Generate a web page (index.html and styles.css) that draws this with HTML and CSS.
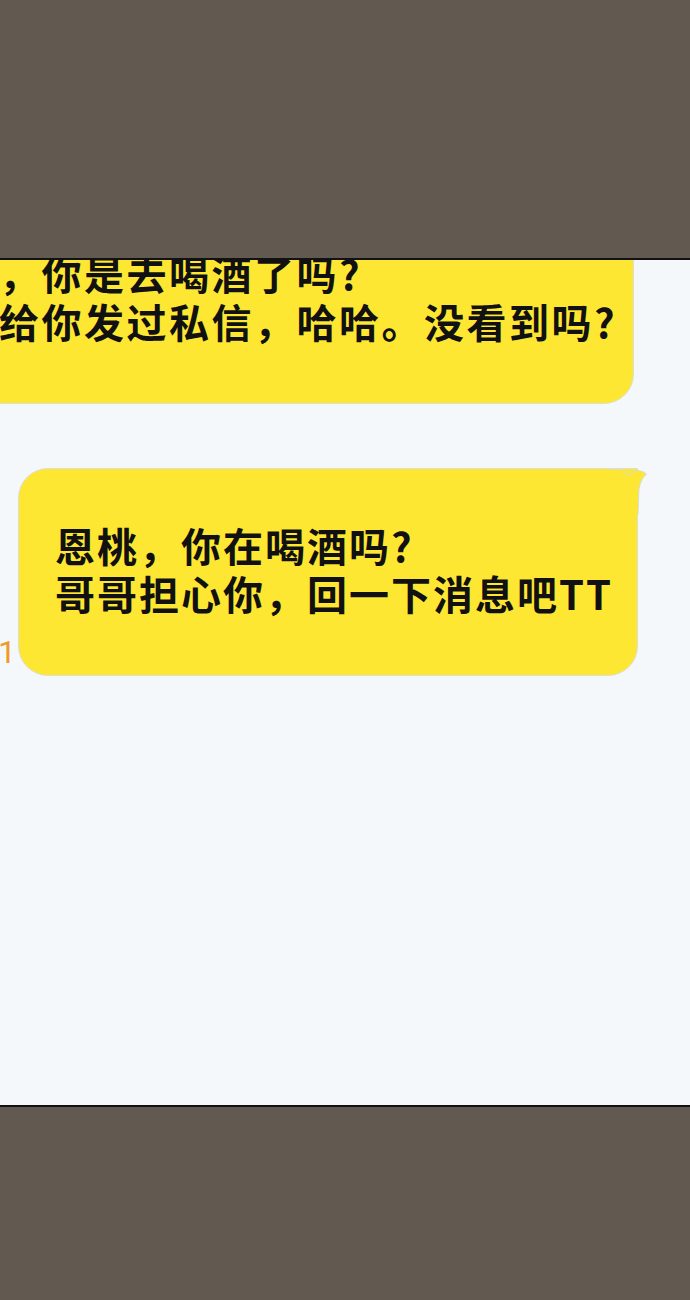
FILE: index.html
```html
<!DOCTYPE html>
<html lang="zh-CN">
<head>
<meta charset="utf-8">
<title>Chat</title>
<link rel="stylesheet" href="styles.css">
</head>
<body>
<div class="page">
  <div class="band band-top"></div>
  <div class="panel">
    <div class="row row-first">
      <div class="bubble bubble-first">
        <p class="line">，你是去喝酒了吗?</p>
        <p class="line">给你发过私信，哈哈。没看到吗?</p>
      </div>
    </div>
    <div class="row row-second">
      <span class="unread">1</span>
      <div class="bubble bubble-second">
        <p class="line">恩桃，你在喝酒吗?</p>
        <p class="line">哥哥担心你，回一下消息吧TT</p>
        <svg class="tail" width="40" height="50" viewBox="0 0 40 50">
          <path d="M0,4 L11,4 Q16,4 20,11 Q25,4 31,5.5 Q36,6.5 38.5,9 Q33,13 31,24 L30,50 L0,50 Z" fill="#fee733"/>
          <path d="M0,4 L11,4 Q16,4 20,11 Q25,4 31,5.5 Q36,6.5 38.5,9 Q33,13 31,24 L30,50" fill="none" stroke="#d8dcd6" stroke-width="1"/>
        </svg>
      </div>
    </div>
  </div>
  <div class="band band-bottom"></div>
</div>
</body>
</html>
```
FILE: styles.css
```css
html, body {
  margin: 0;
  padding: 0;
  background: #625950;
}
.page {
  width: 690px;
  height: 1300px;
  display: flex;
  flex-direction: column;
  overflow: hidden;
}
.band {
  background: #625950;
}
.band-top {
  height: 258px;
  flex: none;
}
.band-bottom {
  flex: 1;
}
.panel {
  flex: none;
  height: 845px;
  background: #f4f8fb;
  border-top: 2px solid #111;
  border-bottom: 2px solid #111;
  overflow: hidden;
  display: flex;
  flex-direction: column;
  gap: 64px;
}
.row {
  display: flex;
  align-items: flex-end;
}
.bubble {
  position: relative;
  box-sizing: border-box;
  background: #fee733;
  border: 1px solid #dcdfd8;
  font-family: "Noto Sans CJK SC", "Noto Sans", sans-serif;
  font-weight: 700;
  font-size: 40px;
  letter-spacing: 2.5px;
  line-height: 48px;
  color: #111;
  white-space: nowrap;
}
.line {
  margin: 0;
}
.bubble-first {
  width: 675px;
  margin-top: -46px;
  margin-left: -41px;
  padding: 34px 0 58px 39px;
  border-radius: 0 0 30px 0;
}
.bubble-second {
  width: 620px;
  padding: 52px 0 58px 36px;
  letter-spacing: 2px;
  border-radius: 30px 0 30px 30px;
}
.tail {
  position: absolute;
  top: -4px;
  right: -11px;
  display: block;
}
.unread {
  width: 16px;
  margin-left: -2px;
  margin-right: 4px;
  margin-bottom: 8px;
  font-family: "Roboto", "Noto Sans", sans-serif;
  font-weight: 400;
  font-size: 32px;
  line-height: 32px;
  color: #ee9a2a;
}
```
